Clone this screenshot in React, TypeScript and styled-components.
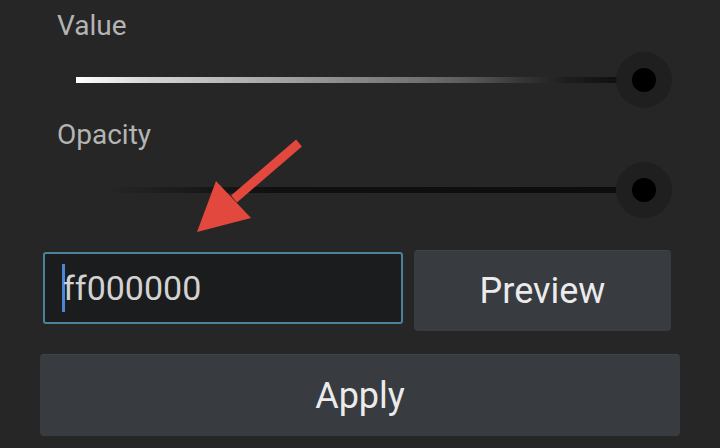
import * as React from "react";
import styled, { createGlobalStyle } from "styled-components";

const GlobalStyle = createGlobalStyle`
  html, body {
    margin: 0;
    padding: 0;
    background: #262626;
  }
  body {
    font-family: Roboto, "Liberation Sans", sans-serif;
  }
`;

const Screen = styled.div`
  position: relative;
  width: 720px;
  height: 448px;
  overflow: hidden;
  background: #262626;
  padding-top: 10px;
  box-sizing: border-box;
`;

const Label = styled.div<{ $top: number }>`
  margin: ${(p) => p.$top}px 0 0 57px;
  height: 32px;
  line-height: 32px;
  font-size: 28px;
  color: #b4b4b4;
`;

const SliderRow = styled.div<{ $top: number }>`
  margin-top: ${(p) => p.$top}px;
  height: 56px;
  display: flex;
  align-items: center;
  padding-left: 76px;
`;

const Track = styled.div<{ $kind: "value" | "opacity" }>`
  position: relative;
  width: 568px;
  height: 6px;
  background: ${(p) =>
    p.$kind === "value"
      ? "linear-gradient(90deg, #ffffff 0%, #d4d4d4 13%, #acacac 32%, #8c8c8c 47%, #727272 60%, #575757 70%, #373737 78%, #1f1f1f 86%, #121212 94%, #0c0c0c 100%)"
      : "linear-gradient(90deg, rgba(20,20,20,0) 5%, #1a1a1a 20%, #101010 35%, #0c0c0c 100%)"};
`;

const Thumb = styled.div`
  position: absolute;
  right: -28px;
  top: 50%;
  width: 56px;
  height: 56px;
  margin-top: -28px;
  border-radius: 50%;
  background: #1f1f1f;
  display: flex;
  align-items: center;
  justify-content: center;

  &::after {
    content: "";
    width: 24px;
    height: 24px;
    border-radius: 50%;
    background: #000;
  }
`;

const InputRow = styled.div`
  margin-top: 32px;
  display: flex;
  align-items: flex-start;
  gap: 11px;
  padding-left: 43px;
`;

const HexField = styled.div`
  margin-top: 2px;
  width: 360px;
  height: 72px;
  box-sizing: border-box;
  border: 2px solid #4f8196;
  border-radius: 3px;
  background: #1b1c1d;
  display: flex;
  align-items: center;
  padding-left: 17px;
  font-size: 34px;
  color: #d2d2d2;
`;

const Caret = styled.span`
  display: inline-block;
  width: 3px;
  height: 48px;
  background: #4f86d4;
  margin-right: -2px;
`;

const Button = styled.div<{ $width: number; $height: number }>`
  width: ${(p) => p.$width}px;
  height: ${(p) => p.$height}px;
  box-sizing: border-box;
  border-radius: 4px;
  background: #383b3f;
  border-top: 1px solid #3f4347;
  display: flex;
  align-items: center;
  justify-content: center;
  font-size: 36px;
  color: #ebebeb;
`;

const ApplyRow = styled.div`
  margin-top: 23px;
  padding-left: 40px;
`;

const Arrow = styled.svg`
  position: absolute;
  left: 0;
  top: 0;
  pointer-events: none;
`;

export default function App() {
  return (
    <>
      <GlobalStyle />
      <Screen>
        <Label $top={0}>Value</Label>
        <SliderRow $top={10}>
          <Track $kind="value">
            <Thumb />
          </Track>
        </SliderRow>
        <Label $top={11}>Opacity</Label>
        <SliderRow $top={11}>
          <Track $kind="opacity">
            <Thumb />
          </Track>
        </SliderRow>
        <InputRow>
          <HexField>
            <Caret />
            ff000000
          </HexField>
          <Button $width={257} $height={81}>
            Preview
          </Button>
        </InputRow>
        <ApplyRow>
          <Button $width={640} $height={82}>
            Apply
          </Button>
        </ApplyRow>
        <Arrow width="720" height="448" viewBox="0 0 720 448">
          <line x1="299" y1="143" x2="234" y2="199" stroke="#e2483d" strokeWidth="9" />
          <polygon points="216,181 251,218 197,232" fill="#e2483d" />
        </Arrow>
      </Screen>
    </>
  );
}
